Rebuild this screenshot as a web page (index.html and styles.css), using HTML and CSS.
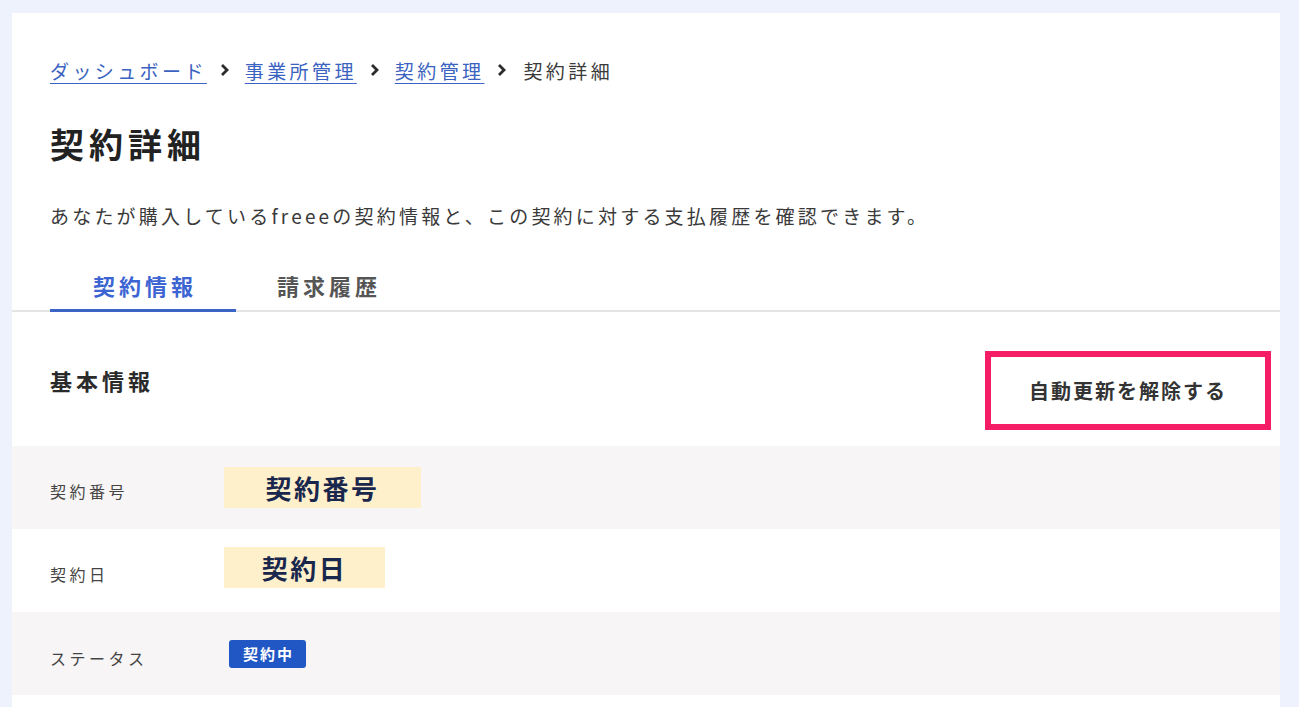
FILE: index.html
```html
<!DOCTYPE html>
<html lang="ja">
<head>
  <meta charset="UTF-8">
  <meta name="viewport" content="width=device-width, initial-scale=1.0">
  <title>契約詳細</title>
  <link rel="stylesheet" href="styles.css">
</head>
<body>
  <main class="card">
    <header class="pageHead">
      <nav class="breadcrumb">
        <a href="#">ダッシュボード</a>
        <svg class="chevron" viewBox="0 0 9 14"><polyline points="2,2 7,7 2,12"/></svg>
        <a href="#">事業所管理</a>
        <svg class="chevron" viewBox="0 0 9 14"><polyline points="2,2 7,7 2,12"/></svg>
        <a href="#">契約管理</a>
        <svg class="chevron" viewBox="0 0 9 14"><polyline points="2,2 7,7 2,12"/></svg>
        <span class="current">契約詳細</span>
      </nav>
      <h1 class="pageTitle">契約詳細</h1>
      <p class="pageDesc">あなたが購入しているfreeeの契約情報と、この契約に対する支払履歴を確認できます。</p>
    </header>

    <div class="tabs">
      <a href="#" class="tab isActive">契約情報</a>
      <a href="#" class="tab">請求履歴</a>
    </div>

    <section class="sectionHead">
      <h2 class="sectionTitle">基本情報</h2>
      <button class="cancelButton" type="button">自動更新を解除する</button>
    </section>

    <dl class="infoList">
      <div class="infoRow">
        <dt class="infoLabel">契約番号</dt>
        <dd class="infoValue"><span class="mask maskWide">契約番号</span></dd>
      </div>
      <div class="infoRow">
        <dt class="infoLabel">契約日</dt>
        <dd class="infoValue"><span class="mask maskNarrow">契約日</span></dd>
      </div>
      <div class="infoRow">
        <dt class="infoLabel">ステータス</dt>
        <dd class="infoValue"><span class="badge">契約中</span></dd>
      </div>
      <div class="infoRow">
        <dt class="infoLabel"></dt>
        <dd class="infoValue"></dd>
      </div>
    </dl>
  </main>
</body>
</html>
```

FILE: styles.css
```css
* {
  box-sizing: border-box;
  margin: 0;
  padding: 0;
}
body {
  background-color: #EDF2FC;
  font-family: "Noto Sans CJK JP", "Noto Sans", sans-serif;
  color: #333;
  padding: 13px 19px 0 12px;
  height: 100vh;
  overflow: hidden;
}

.card {
  background: #fff;
  min-height: 100%;
}

.pageHead {
  padding: 44px 38px 0;
}
.breadcrumb {
  display: flex;
  align-items: center;
  height: 26px;
  font-size: 19px;
  letter-spacing: 3.4px;
}
.breadcrumb a {
  color: #3A62C0;
  text-decoration: underline;
  text-underline-offset: 4px;
  text-decoration-thickness: 1px;
}
.chevron {
  width: 9px;
  height: 14px;
  margin: 0 15px 0 13px;
  fill: none;
  stroke: #2b2b2b;
  stroke-width: 2.8;
}
.breadcrumb a + .chevron + a {
  margin-left: 1px;
}
.current {
  color: #3a3a3a;
  margin-left: 2px;
}
.pageTitle {
  margin-top: 39px;
  font-size: 34px;
  line-height: 44px;
  font-weight: 700;
  letter-spacing: 5px;
  color: #222;
}
.pageDesc {
  margin-top: 35px;
  font-size: 19px;
  line-height: 30px;
  letter-spacing: 3.2px;
  color: #3a3a3a;
}

.tabs {
  display: flex;
  margin-top: 28px;
  padding-left: 38px;
  border-bottom: 2px solid #E4E4E4;
}
.tab {
  display: block;
  padding: 12px 39px 10px 43px;
  font-size: 22px;
  line-height: 28px;
  font-weight: 700;
  letter-spacing: 4px;
  color: #555;
  text-decoration: none;
  border-bottom: 3px solid transparent;
  margin-bottom: -2px;
}
.tab + .tab {
  padding-left: 41px;
}
.tab.isActive {
  color: #3C64D2;
  border-bottom-color: #3A64C6;
}

.sectionHead {
  display: flex;
  justify-content: space-between;
  align-items: flex-start;
  padding: 39px 9px 16px 38px;
}
.sectionTitle {
  margin-top: 14px;
  font-size: 22px;
  line-height: 30px;
  font-weight: 700;
  letter-spacing: 4px;
  color: #2a2a2a;
}
.cancelButton {
  width: 286px;
  height: 79px;
  border: 6px solid #F41D66;
  background: #fff;
  font-family: inherit;
  font-size: 20px;
  font-weight: 700;
  letter-spacing: 2px;
  color: #333;
  cursor: pointer;
}

.infoRow {
  display: flex;
  align-items: center;
  height: 83px;
  padding-left: 38px;
}
.infoRow:nth-child(odd) {
  background: #F7F5F5;
}
.infoLabel {
  width: 174px;
  font-size: 16px;
  letter-spacing: 3.5px;
  color: #444;
  padding-top: 6px;
}
.infoRow:nth-child(3) .infoLabel {
  padding-top: 8px;
}
.mask {
  display: inline-flex;
  align-items: center;
  justify-content: center;
  height: 41px;
  background: #FFF0CC;
  color: #1A274C;
  font-size: 26px;
  font-weight: 700;
  letter-spacing: 2.5px;
}
.maskWide {
  width: 197px;
}
.maskNarrow {
  width: 161px;
  margin-top: -6px;
}
.badge {
  display: inline-block;
  margin-left: 5px;
  padding: 0 12px 0 14px;
  height: 28px;
  line-height: 28px;
  background: #2157C4;
  color: #fff;
  font-size: 15px;
  font-weight: 700;
  letter-spacing: 2px;
  border-radius: 3px;
}
```
